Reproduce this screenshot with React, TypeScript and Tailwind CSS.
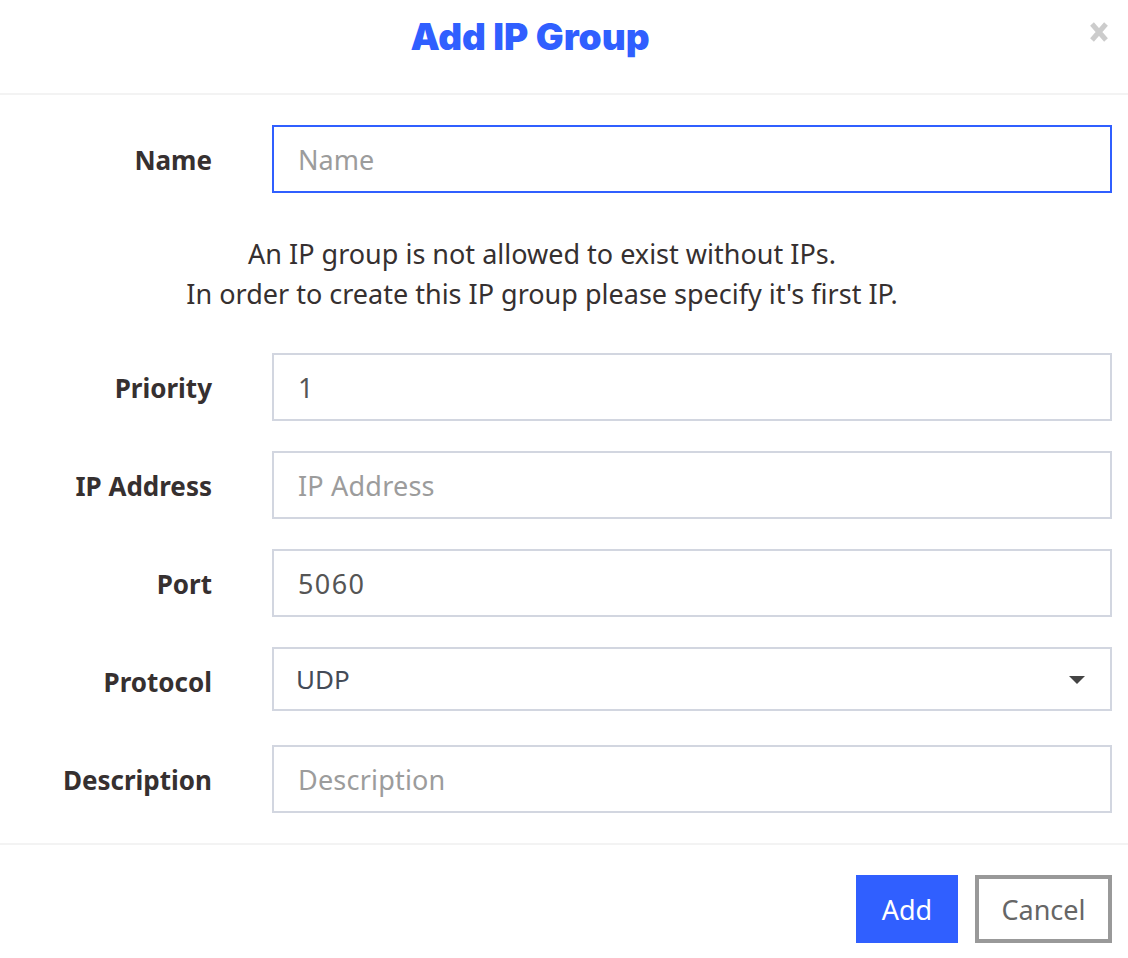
const labelClass = "w-[212px] shrink-0 pt-[2px] text-right text-[26px] font-bold text-[#363030]";
const inputClass =
  "ml-[60px] h-[68px] w-[840px] border-2 border-[#d2d6e0] bg-white pl-[24px] pr-[25px] pt-[1px] text-[27px] tracking-[1.4px] text-[#555] outline-none placeholder:tracking-[0.2px] placeholder:text-[#9c9c9c]";

function Field({ label, placeholder, value }: { label: string; placeholder: string; value?: string }) {
  return (
    <div className="flex items-center">
      <label className={labelClass}>{label}</label>
      <input className={inputClass} placeholder={placeholder} defaultValue={value} />
    </div>
  );
}

export default function App() {
  return (
    <div className="relative h-[958px] w-[1128px] overflow-hidden bg-white font-['Noto_Sans',sans-serif]">
      {/* Header */}
      <div className="flex h-[95px] items-start justify-center border-b-2 border-[#f3f3f3] pr-[68px] pt-[12px]">
        <h1 className="font-['Inter',sans-serif] text-[37px] font-black leading-[50px] text-[#305fff]">
          Add IP Group
        </h1>
      </div>
      <button className="absolute right-[18px] top-[21px] text-[#cccccc]">
        <svg width="22" height="22" viewBox="0 0 22 22">
          <path d="M4 3 L18 19 M18 3 L4 19" stroke="currentColor" strokeWidth="5" fill="none" />
        </svg>
      </button>

      {/* Name */}
      <div className="mt-[30px] flex items-center">
        <label className={labelClass}>Name</label>
        <input
          className="ml-[60px] h-[68px] w-[840px] border-2 border-[#305fff] bg-white pl-[24px] pr-[25px] pt-[1px] text-[27px] text-[#555] outline-none placeholder:text-[#9c9c9c]"
          placeholder="Name"
        />
      </div>

      <p className="mt-[41px] w-[1084px] text-center text-[27px] leading-[40px] text-[#363030]">
        An IP group is not allowed to exist without IPs.
        <br />
        In order to create this IP group please specify it's first IP.
      </p>

      <div className="mt-[39px] flex flex-col gap-[30px]">
        <Field label="Priority" placeholder="Priority" value="1" />
        <Field label="IP Address" placeholder="IP Address" />
        <Field label="Port" placeholder="Port" value="5060" />
        <div className="mb-[4px] flex items-center">
          <label className="w-[212px] shrink-0 pt-[6px] text-right text-[26px] font-bold text-[#363030]">Protocol</label>
          <div className="ml-[60px] flex h-[64px] w-[840px] items-center justify-between border-2 border-[#d2d6e0] bg-white pl-[22px] pr-[25px] pt-[1px] text-[26px] text-[#444b57]">
            <span>UDP</span>
            <svg width="16" height="8" viewBox="0 0 16 8">
              <path d="M0 0 H16 L8 8 Z" fill="#444" />
            </svg>
          </div>
        </div>
        <Field label="Description" placeholder="Description" />
      </div>

      {/* Footer */}
      <div className="mt-[30px] flex justify-end gap-[17px] border-t-2 border-[#f3f3f3] pr-[16px] pt-[30px]">
        <button className="h-[68px] w-[102px] bg-[#305fff] pt-[2px] text-[27px] text-white">Add</button>
        <button className="h-[68px] w-[137px] border-4 border-[#999999] bg-white pt-[2px] text-[27px] text-[#666]">
          Cancel
        </button>
      </div>
    </div>
  );
}
